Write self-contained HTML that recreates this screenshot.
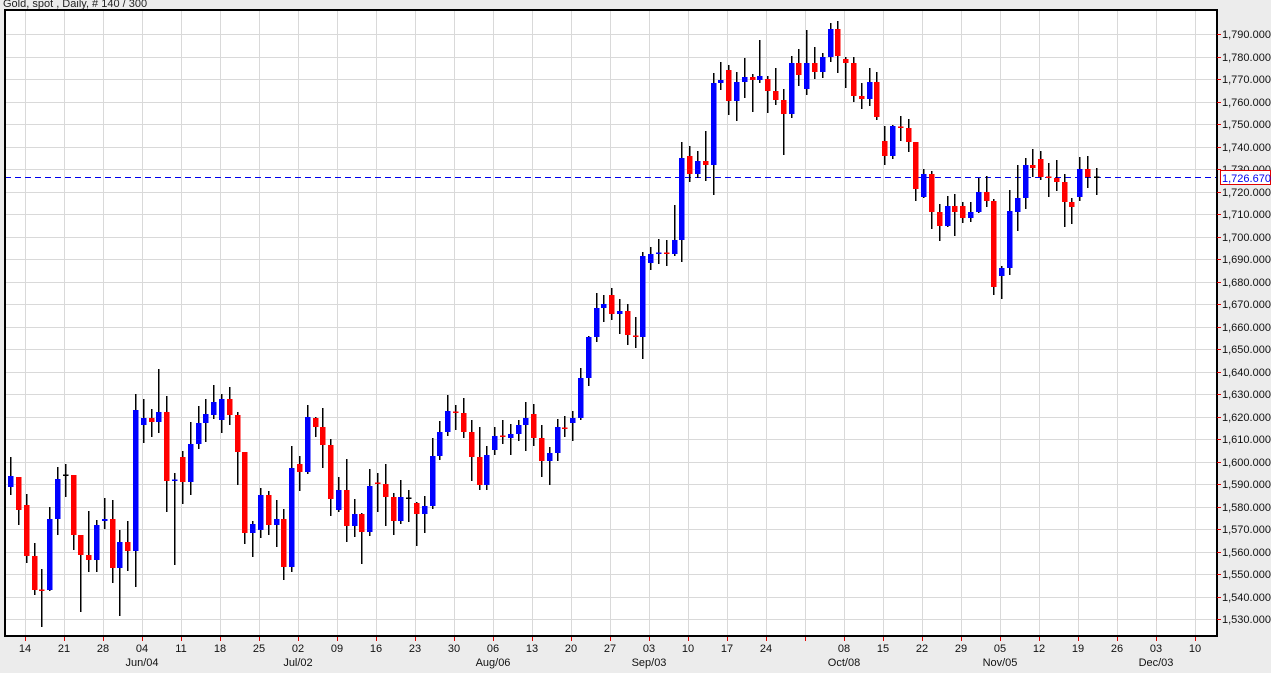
<!DOCTYPE html>
<html><head><meta charset="utf-8"><style>
html,body{margin:0;padding:0;background:#ececec;width:1271px;height:673px;overflow:hidden}
svg{display:block;font-family:"Liberation Sans",Arial,sans-serif}
</style></head><body>
<svg id="s" width="1271" height="673" xmlns="http://www.w3.org/2000/svg">
<rect x="0" y="0" width="1271" height="673" fill="#ececec"/>
<text x="3" y="7" font-size="11" fill="#222">Gold, spot , Daily, # 140 / 300</text>
<rect x="5" y="10" width="1212" height="626" fill="#fff"/>
<g id="grid" stroke="#d9d9d9" stroke-width="1"></g>
<line x1="5" y1="177.5" x2="1217" y2="177.5" stroke="#0000ee" stroke-width="1" stroke-dasharray="6,4"/>
<g id="c"></g>
<rect x="5" y="10" width="1212" height="626" fill="none" stroke="#000" stroke-width="2"/>
<g id="ticks" stroke="#e00000" stroke-width="1"></g>
<g font-size="11" fill="#111">
<text x="1222" y="38">1,790.000</text><text x="1222" y="61">1,780.000</text><text x="1222" y="83">1,770.000</text><text x="1222" y="106">1,760.000</text><text x="1222" y="128">1,750.000</text><text x="1222" y="151">1,740.000</text><text x="1222" y="173">1,730.000</text><text x="1222" y="196">1,720.000</text><text x="1222" y="218">1,710.000</text><text x="1222" y="241">1,700.000</text><text x="1222" y="263">1,690.000</text><text x="1222" y="286">1,680.000</text><text x="1222" y="308">1,670.000</text><text x="1222" y="331">1,660.000</text><text x="1222" y="353">1,650.000</text><text x="1222" y="376">1,640.000</text><text x="1222" y="398">1,630.000</text><text x="1222" y="421">1,620.000</text><text x="1222" y="443">1,610.000</text><text x="1222" y="466">1,600.000</text><text x="1222" y="488">1,590.000</text><text x="1222" y="511">1,580.000</text><text x="1222" y="533">1,570.000</text><text x="1222" y="556">1,560.000</text><text x="1222" y="578">1,550.000</text><text x="1222" y="601">1,540.000</text><text x="1222" y="623">1,530.000</text>
</g>
<rect x="1220.5" y="170.5" width="50" height="14" fill="#fff" stroke="#e00000"/>
<text x="1222" y="182" font-size="11" fill="#0000ee">1,726.670</text>
<g font-size="11" fill="#111" text-anchor="middle">
<text x="25" y="652">14</text><text x="64" y="652">21</text><text x="103" y="652">28</text><text x="142" y="652">04</text><text x="181" y="652">11</text><text x="220" y="652">18</text><text x="259" y="652">25</text><text x="298" y="652">02</text><text x="337" y="652">09</text><text x="376" y="652">16</text><text x="415" y="652">23</text><text x="454" y="652">30</text><text x="493" y="652">06</text><text x="532" y="652">13</text><text x="571" y="652">20</text><text x="610" y="652">27</text><text x="649" y="652">03</text><text x="688" y="652">10</text><text x="727" y="652">17</text><text x="766" y="652">24</text><text x="844" y="652">08</text><text x="883" y="652">15</text><text x="922" y="652">22</text><text x="961" y="652">29</text><text x="1000" y="652">05</text><text x="1039" y="652">12</text><text x="1078" y="652">19</text><text x="1117" y="652">26</text><text x="1156" y="652">03</text><text x="1195" y="652">10</text>
<text x="142" y="666">Jun/04</text><text x="298" y="666">Jul/02</text><text x="493" y="666">Aug/06</text><text x="649" y="666">Sep/03</text><text x="844" y="666">Oct/08</text><text x="1000" y="666">Nov/05</text><text x="1156" y="666">Dec/03</text>
</g>
</svg>
<script>
var NS="http://www.w3.org/2000/svg";
function el(p,t,a){var e=document.createElementNS(NS,t);for(var k in a)e.setAttribute(k,a[k]);p.appendChild(e);return e;}
var g=document.getElementById('grid'),tk=document.getElementById('ticks');
for(var i=0;i<31;i++){var x=25+39*i+0.5;el(g,'line',{x1:x,y1:10,x2:x,y2:636});el(tk,'line',{x1:x,y1:637,x2:x,y2:641,stroke:'#e00000'});}
for(var p=1530;p<=1790;p+=10){var y=Math.round(34+(1790-p)*2.25)+0.5;el(g,'line',{x1:5,y1:y,x2:1217,y2:y});el(tk,'line',{x1:1217,y1:y,x2:1221,y2:y});}
var D=[
[10,457,476,487,495,'b'],[18,477,477,510,525,'r'],[26,494,505,556,563,'r'],[33.5,543,556,590,595,'r'],[41,569,590,590,627,'r'],
[49,507,519,590,591,'b'],[57,467,479,519,535,'b'],[65,464,475,475,497,'k'],[72.5,475,475,535,550,'r'],[80,535,535,555,612,'r'],
[88,511,555,560,572,'r'],[96,520,525,560,572,'b'],[104,498,519,521,529,'b'],[111.5,500,519,568,583,'r'],[119,530,542,568,616,'b'],
[127,521,542,551,571,'r'],[135,394,410,551,587,'b'],[143,399,418,425,443,'b'],[150.5,409,418,422,437,'r'],[158,369,412,422,433,'b'],
[166,396,412,481,512,'r'],[174,473,480,480,565,'b'],[182,451,457,482,504,'r'],[190,422,444,482,495,'b'],[197.5,406,423,444,449,'b'],
[205,399,414,423,442,'b'],[213,385,402,415,419,'b'],[221,394,399,420,433,'b'],[229,387,399,415,425,'r'],[236.5,412,415,452,485,'r'],
[244,452,452,533,544,'r'],[252,521,524,533,557,'b'],[260,488,495,530,538,'b'],[268,491,495,525,535,'r'],[275.5,500,519,525,547,'b'],
[283,509,519,567,580,'r'],[291,446,468,567,572,'b'],[299,456,464,472,491,'r'],[307,405,417,472,474,'b'],[314.5,417,418,427,437,'r'],
[322,408,427,445,468,'r'],[330,439,445,499,516,'r'],[338,477,490,510,512,'b'],[346,459,490,526,542,'r'],[353.5,499,514,526,537,'b'],
[361,513,514,532,564,'r'],[369,469,486,532,536,'b'],[377,473,483,483,512,'r'],[385,464,484,497,526,'r'],[392.5,493,497,521,535,'r'],
[400,480,497,521,524,'b'],[408,490,498,498,522,'k'],[416,502,503,514,546,'r'],[424,496,506,514,533,'b'],[431.5,438,456,506,509,'b'],
[439,421,432,456,460,'b'],[447,395,411,432,436,'b'],[455,405,412,412,430,'r'],[463,398,413,432,438,'r'],[471,420,432,457,481,'r'],
[478.5,427,457,485,490,'r'],[486,446,455,485,490,'b'],[494,427,436,450,455,'b'],[502,420,436,436,444,'r'],[510,424,434,438,455,'b'],
[517.5,420,425,434,441,'b'],[525,402,418,425,451,'b'],[533,404,414,438,446,'r'],[541,425,438,461,477,'r'],[549,447,453,461,485,'b'],
[556.5,419,427,453,461,'b'],[564,416,428,428,437,'r'],[572,411,418,423,441,'b'],[580,368,378,418,420,'b'],[588,336,337,378,386,'b'],
[595.5,293,308,337,342,'b'],[603,295,304,308,322,'b'],[611,288,295,314,320,'r'],[619,299,311,314,334,'b'],[627,304,311,335,345,'r'],
[634.5,317,336,336,348,'r'],[642,252,256,337,359,'b'],[650,247,254,263,270,'b'],[658,239,253,253,264,'b'],[666,240,253,253,266,'r'],
[673.5,205,240,254,256,'b'],[681,142,158,240,262,'b'],[689,146,156,174,182,'r'],[697,151,161,174,178,'b'],[705,131,161,165,181,'r'],
[712.5,73,83,165,195,'b'],[720,62,80,83,90,'b'],[728,65,70,101,115,'r'],[736,72,82,101,121,'b'],[744,58,77,82,98,'b'],
[751.5,74,77,80,112,'r'],[759,40,76,80,83,'b'],[767,76,79,91,113,'r'],[775,68,91,100,105,'r'],[783,89,100,114,155,'r'],
[790.5,56,63,114,118,'b'],[798,49,63,75,86,'r'],[806,30,63,89,95,'b'],[814,47,63,72,79,'r'],[822,53,57,72,78,'b'],
[829.5,23,29,57,62,'b'],[837,21,29,56,73,'r'],[845,57,59,63,88,'r'],[853,57,63,96,102,'r'],[861,83,96,99,109,'r'],
[868.5,68,82,99,106,'b'],[876,72,82,117,120,'r'],[884,126,141,156,165,'r'],[892,125,126,156,159,'b'],[900,116,127,127,141,'r'],
[907.5,119,128,142,152,'r'],[915,142,142,189,201,'r'],[923,169,174,197,198,'b'],[931,171,174,212,229,'r'],[939,204,212,226,241,'r'],
[946.5,196,206,226,227,'b'],[954,194,206,212,236,'r'],[962,202,206,218,223,'r'],[970,202,212,218,222,'b'],[978,178,192,212,213,'b'],
[985.5,176,192,201,207,'r'],[993,199,201,287,295,'r'],[1001,266,268,276,299,'b'],[1009,190,211,268,275,'b'],[1017,165,198,212,231,'b'],
[1024.5,158,165,198,209,'b'],[1032,149,165,168,177,'r'],[1040,151,159,177,180,'r'],[1048,163,177,177,197,'r'],[1056,160,178,182,191,'r'],
[1063.5,174,182,202,227,'r'],[1071,198,202,207,224,'r'],[1079,157,169,197,201,'b'],[1087,156,169,177,188,'r'],[1095.5,168,177,177,195,'k']
];
var cg=document.getElementById('c');
var col={b:'#0000ff',r:'#ff0000',k:'#000'};
D.forEach(function(d){var x=Math.round(d[0]);
el(cg,'rect',{x:x,y:d[1],width:1.5,height:d[4]-d[1],fill:'#000'});
var h=Math.max(d[3]-d[2],1.5);
el(cg,'rect',{x:x-2,y:d[2]-(d[3]==d[2]?0.5:0),width:5.5,height:h,fill:col[d[5]]});});
</script>
</body></html>
